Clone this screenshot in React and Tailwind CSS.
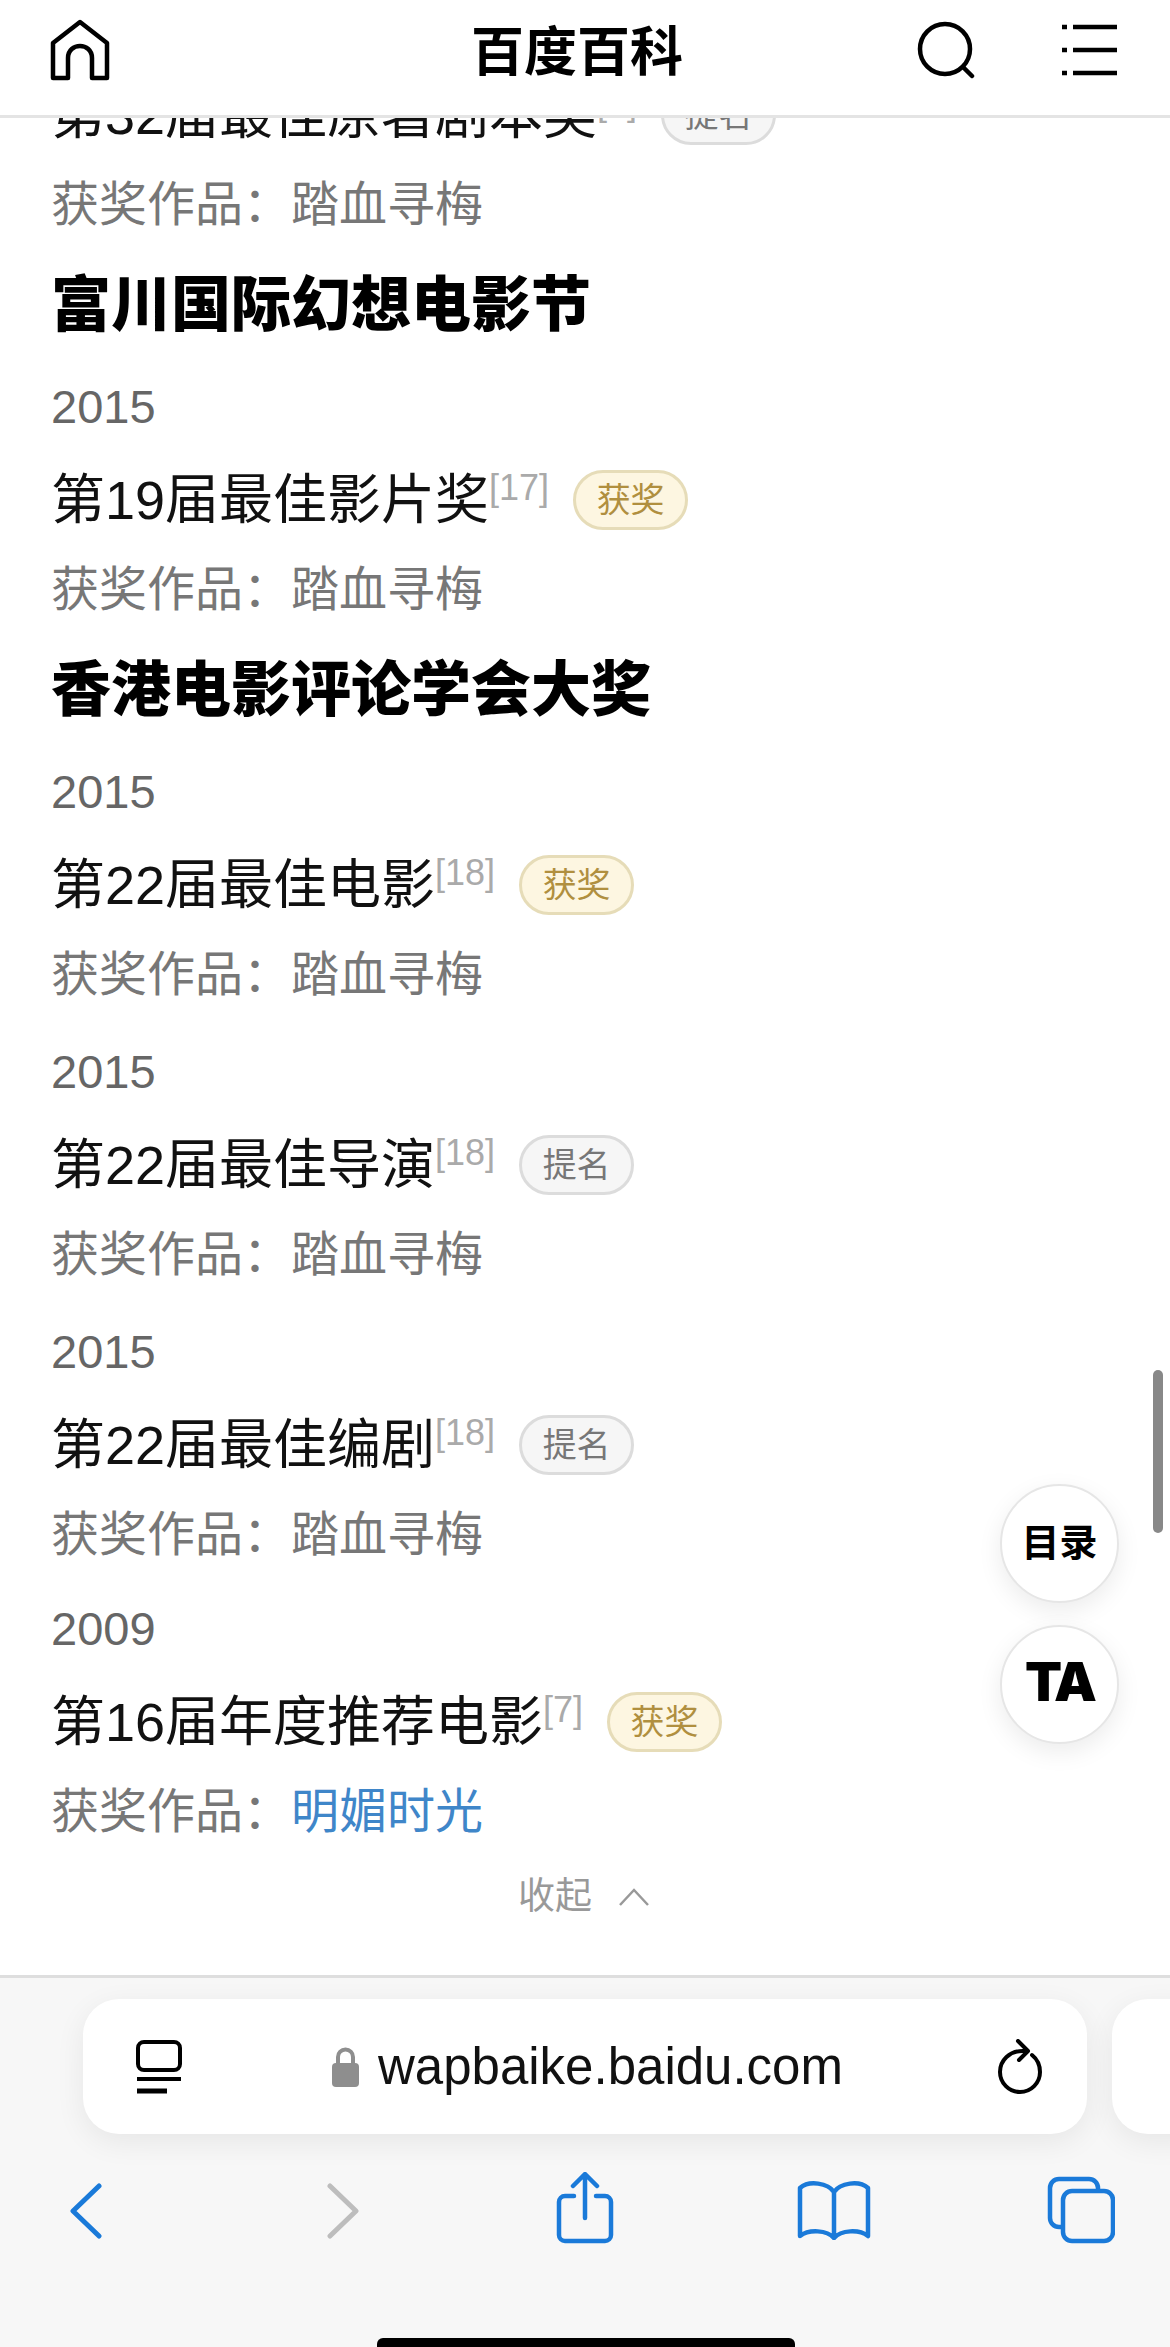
const sections = [
  {
    items: [
      { title: '第32届最佳原著剧本奖', ref: '[7]', badge: 'nominated', work: '踏血寻梅', clipped: true },
    ],
  },
  {
    name: '富川国际幻想电影节',
    items: [{ year: '2015', title: '第19届最佳影片奖', ref: '[17]', badge: 'won', work: '踏血寻梅' }],
  },
  {
    name: '香港电影评论学会大奖',
    items: [
      { year: '2015', title: '第22届最佳电影', ref: '[18]', badge: 'won', work: '踏血寻梅' },
      { year: '2015', title: '第22届最佳导演', ref: '[18]', badge: 'nominated', work: '踏血寻梅' },
      { year: '2015', title: '第22届最佳编剧', ref: '[18]', badge: 'nominated', work: '踏血寻梅' },
      { year: '2009', title: '第16届年度推荐电影', ref: '[7]', badge: 'won', work: '明媚时光', link: true, tight: true },
    ],
  },
]

const Badge = ({ type }) =>
  type === 'won' ? (
    <span className="ml-[24px] flex h-[60px] w-[115px] items-center justify-center rounded-full border-[3px] border-[#e6dcb8] bg-[#fdf6e1] text-[34px] text-[#b08f3f]">
      获奖
    </span>
  ) : (
    <span className="ml-[24px] flex h-[60px] w-[115px] items-center justify-center rounded-full border-[3px] border-[#dcdcdc] bg-[#f6f6f6] text-[34px] text-[#777777]">
      提名
    </span>
  )

const Award = ({ item, first }) => (
  <div className={first ? '' : item.tight ? 'mt-[34px]' : 'mt-[37px]'}>
    {item.year && <p className="mb-[33px] h-[60px] text-[47px] leading-[60px] text-[#666666]">{item.year}</p>}
    <div className="flex h-[60px] items-center">
      <span className="text-[54px] leading-[60px] text-[#111111]">{item.title}</span>
      <span className="mb-[24px] text-[36px] leading-[36px] text-[#aaaaaa]">{item.ref}</span>
      <Badge type={item.badge} />
    </div>
    <p className="mt-[30px] h-[60px] text-[48px] leading-[60px] text-[#777777]">
      获奖作品：
      <span className={item.link ? 'text-[#3f86c9]' : ''}>{item.work}</span>
    </p>
  </div>
)

const Header = () => (
  <header className="relative z-10 flex h-[118px] shrink-0 items-start border-b-[3px] border-[#e4e4e4] bg-white">
    <svg className="ml-[50px] mt-[19px]" width="60" height="62" viewBox="0 0 60 62" fill="none" stroke="#000" strokeWidth="4.5" strokeLinejoin="round">
      <path d="M3 59V24L30 3l27 21v35H42V39c0-16-24-16-24 0v20z" />
    </svg>
    <h1 className="ml-[361px] mt-[25px] h-[56px] w-[212px] whitespace-nowrap text-[53px] font-bold leading-[56px] text-black">百度百科</h1>
    <svg className="ml-[234px] mt-[21px]" width="58" height="58" viewBox="0 0 58 58" fill="none" stroke="#000" strokeWidth="4.5" strokeLinecap="round">
      <circle cx="28" cy="28" r="25" />
      <path d="M46 46l9 9" />
    </svg>
    <svg className="ml-[87px] mt-[24px]" width="58" height="52" viewBox="0 0 58 52" fill="none" stroke="#000" strokeWidth="4.5">
      <path d="M0 3h5M0 26h5M0 49h5M11 3h44M11 26h44M11 49h44" />
    </svg>
  </header>
)

const FloatingButtons = () => (
  <div className="absolute left-[1000px] top-[1484px] z-10 flex flex-col gap-[22px]">
    <button className="flex h-[119px] w-[119px] items-center justify-center rounded-full border-2 border-[#e6e6e6] bg-white text-[38px] font-bold text-black shadow-[0_8px_24px_rgba(0,0,0,0.08)]">
      目录
    </button>
    <button className="flex h-[119px] w-[119px] items-center justify-center rounded-full border-2 border-[#e6e6e6] bg-white pb-[6px] font-['Inter'] text-[54px] font-black tracking-[-3px] text-black shadow-[0_8px_24px_rgba(0,0,0,0.08)]">
      TA
    </button>
  </div>
)

const BottomBar = () => (
  <footer className="relative h-[372px] shrink-0 overflow-hidden border-t-[3px] border-[#dedede] bg-[#f7f7f7]">
    <div className="flex pl-[83px] pt-[21px]">
      <div className="flex h-[135px] w-[1004px] shrink-0 items-center rounded-[36px] bg-white shadow-[0_8px_30px_rgba(0,0,0,0.07)]">
        <svg className="ml-[53px]" width="46" height="54" viewBox="0 0 46 54" fill="none" stroke="#000" strokeWidth="4">
          <rect x="2" y="2" width="42" height="28" rx="6" />
          <path d="M1 39h44" />
          <path d="M1 51h30" strokeWidth="5" />
        </svg>
        <svg className="ml-[150px]" width="27" height="40" viewBox="0 0 27 40" fill="none">
          <path d="M6 18V10a7.5 7.5 0 0 1 15 0v8" stroke="#8e8e8e" strokeWidth="4" />
          <rect y="16" width="27" height="24" rx="4" fill="#8e8e8e" />
        </svg>
        <span className="ml-[19px] w-[466px] whitespace-nowrap text-[51px] leading-[60px] text-[#111111]">wapbaike.baidu.com</span>
        <svg className="ml-[153px]" width="46" height="56" viewBox="0 0 46 56" fill="none" stroke="#000" strokeWidth="4" strokeLinecap="round" strokeLinejoin="round">
          <path d="M28 12C12 11 3 22 3 33a20 20 0 0 0 40 0c0-7-3-13-8-17" />
          <path d="M21 2l10 10-9 9" />
        </svg>
      </div>
      <div className="ml-[25px] h-[135px] w-[100px] shrink-0 rounded-[36px] bg-white shadow-[0_8px_30px_rgba(0,0,0,0.07)]" />
    </div>
    <nav className="flex items-start pl-[69px] pt-[38px]">
      <svg className="mt-[11px]" width="34" height="56" viewBox="0 0 34 56" fill="none" stroke="#1a7ad9" strokeWidth="5" strokeLinecap="round" strokeLinejoin="round">
        <path d="M30 3L4 28l26 25" />
      </svg>
      <svg className="ml-[223px] mt-[11px]" width="34" height="56" viewBox="0 0 34 56" fill="none" stroke="#bdbdbd" strokeWidth="5" strokeLinecap="round" strokeLinejoin="round">
        <path d="M4 3l26 25L4 53" />
      </svg>
      <svg className="ml-[196px]" width="58" height="72" viewBox="0 0 58 72" fill="none" stroke="#1a7ad9" strokeWidth="4.5" strokeLinecap="round" strokeLinejoin="round">
        <path d="M18 24H9a6 6 0 0 0-6 6v33a6 6 0 0 0 6 6h40a6 6 0 0 0 6-6V30a6 6 0 0 0-6-6h-9" />
        <path d="M29 46V3M17 14L29 2l12 12" />
      </svg>
      <svg className="ml-[183px] mt-[8px]" width="74" height="60" viewBox="0 0 74 60" fill="none" stroke="#1a7ad9" strokeWidth="4.5" strokeLinecap="round" strokeLinejoin="round">
        <path d="M37 12C31 3 12 0 3 8v48c9-7 27-6 34 2 7-8 25-9 34-2V8C62 0 43 3 37 12zM37 12v46" />
      </svg>
      <svg className="ml-[176px] mt-[4px]" width="68" height="68" viewBox="0 0 68 68" fill="none" stroke="#1a7ad9" strokeWidth="4.5" strokeLinejoin="round">
        <path d="M51 15v-3a9 9 0 0 0-9-9H12a9 9 0 0 0-9 9v30a9 9 0 0 0 9 9h3" />
        <rect x="16" y="15" width="50" height="50" rx="9" />
      </svg>
    </nav>
    <div className="absolute bottom-0 left-[377px] h-[9px] w-[418px] rounded-t-[6px] bg-black" />
  </footer>
)

export default function App() {
  return (
    <div className="relative flex h-[2347px] w-[1170px] flex-col overflow-hidden bg-white [font-family:'Liberation_Sans','Noto_Sans_CJK_SC',sans-serif]">
      <Header />
      <main className="min-h-0 flex-1 overflow-hidden pl-[51px]">
        <div className="-mt-[33px]">
          {sections.map((section, index) => (
            <section key={index}>
              {section.name && (
                <h2 className="mb-[41px] mt-[41px] h-[60px] text-[60px] font-black leading-[60px] text-black">{section.name}</h2>
              )}
              {section.items.map((item, itemIndex) => (
                <Award key={itemIndex} item={item} first={itemIndex === 0} />
              ))}
            </section>
          ))}
          <div className="mt-[33px] flex items-center pl-[467px] text-[37px] leading-[44px] text-[#999999]">
            收起
            <svg className="ml-[27px]" width="30" height="18" viewBox="0 0 30 18" fill="none" stroke="#999999" strokeWidth="2.5">
              <path d="M1 17L15 2l14 15" />
            </svg>
          </div>
        </div>
      </main>
      <div className="absolute left-[1153px] top-[1370px] h-[163px] w-[10px] rounded-full bg-[#888888]" />
      <FloatingButtons />
      <BottomBar />
    </div>
  )
}
